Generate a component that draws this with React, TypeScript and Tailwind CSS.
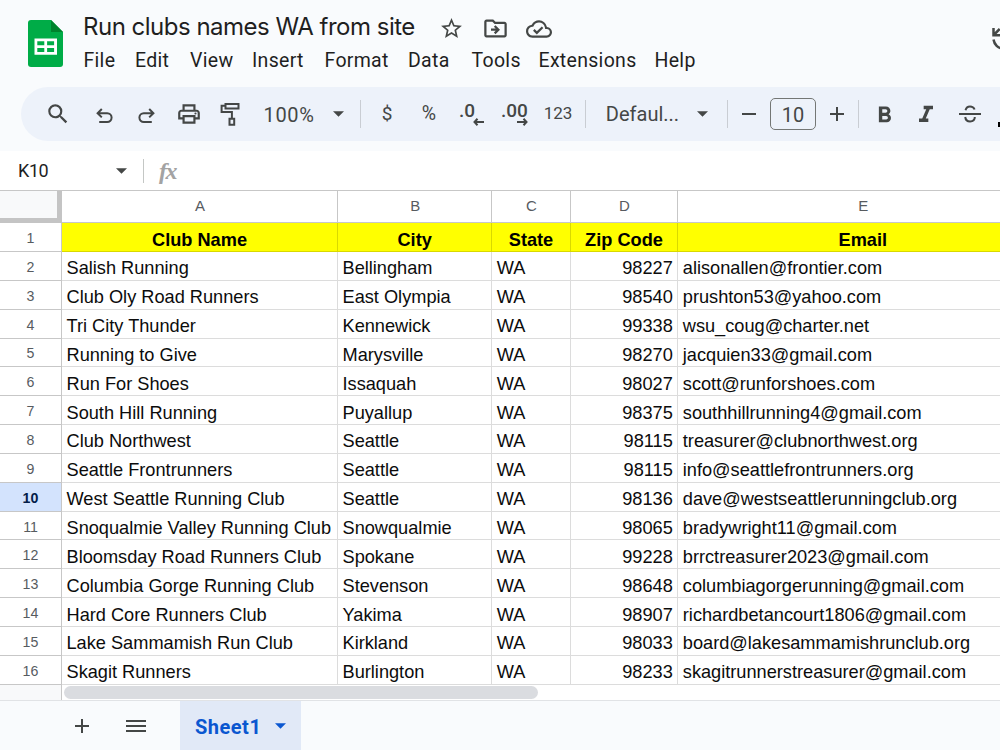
import type { ReactNode } from 'react'
import { MdFormatBold, MdFormatItalic, MdOutlineCloudDone, MdOutlineDriveFileMove, MdOutlinePrint, MdSearch, MdStarBorder } from 'react-icons/md'

const menus = [
  { label: 'File', width: 'w-[51.5px]' },
  { label: 'Edit', width: 'w-[55px]' },
  { label: 'View', width: 'w-[62px]' },
  { label: 'Insert', width: 'w-[72.5px]' },
  { label: 'Format', width: 'w-[83.5px]' },
  { label: 'Data', width: 'w-[63.5px]' },
  { label: 'Tools', width: 'w-[67px]' },
  { label: 'Extensions', width: 'w-[116px]' },
  { label: 'Help', width: 'w-[60px]' },
]

const columns = [
  { letter: 'A', title: 'Club Name' },
  { letter: 'B', title: 'City' },
  { letter: 'C', title: 'State' },
  { letter: 'D', title: 'Zip Code' },
  { letter: 'E', title: 'Email' },
]

const clubs = [
  ['Salish Running', 'Bellingham', 'WA', '98227', 'alisonallen@frontier.com'],
  ['Club Oly Road Runners', 'East Olympia', 'WA', '98540', 'prushton53@yahoo.com'],
  ['Tri City Thunder', 'Kennewick', 'WA', '99338', 'wsu_coug@charter.net'],
  ['Running to Give', 'Marysville', 'WA', '98270', 'jacquien33@gmail.com'],
  ['Run For Shoes', 'Issaquah', 'WA', '98027', 'scott@runforshoes.com'],
  ['South Hill Running', 'Puyallup', 'WA', '98375', 'southhillrunning4@gmail.com'],
  ['Club Northwest', 'Seattle', 'WA', '98115', 'treasurer@clubnorthwest.org'],
  ['Seattle Frontrunners', 'Seattle', 'WA', '98115', 'info@seattlefrontrunners.org'],
  ['West Seattle Running Club', 'Seattle', 'WA', '98136', 'dave@westseattlerunningclub.org'],
  ['Snoqualmie Valley Running Club', 'Snowqualmie', 'WA', '98065', 'bradywright11@gmail.com'],
  ['Bloomsday Road Runners Club', 'Spokane', 'WA', '99228', 'brrctreasurer2023@gmail.com'],
  ['Columbia Gorge Running Club', 'Stevenson', 'WA', '98648', 'columbiagorgerunning@gmail.com'],
  ['Hard Core Runners Club', 'Yakima', 'WA', '98907', 'richardbetancourt1806@gmail.com'],
  ['Lake Sammamish Run Club', 'Kirkland', 'WA', '98033', 'board@lakesammamishrunclub.org'],
  ['Skagit Runners', 'Burlington', 'WA', '98233', 'skagitrunnerstreasurer@gmail.com'],
]

const gridCols = 'grid grid-rows-[100%] grid-cols-[62px_276px_154.3px_78.4px_107.6px_370px]'

function Slot({ width = 'w-[42px]', children }: { width?: string; children: ReactNode }) {
  return <div className={`flex h-full shrink-0 items-center justify-center ${width}`}>{children}</div>
}

function Divider() {
  return <div className="h-[28px] w-px shrink-0 bg-[#c9cdd3]" />
}

function Caret({ className = 'fill-[#444746]' }: { className?: string }) {
  return (
    <svg viewBox="0 0 12 6" className={`h-[6px] w-[11px] shrink-0 ${className}`}>
      <path d="M0 0h12L6 6z" />
    </svg>
  )
}

function SheetsLogo() {
  return (
    <svg viewBox="0 0 35 48" className="h-[48px] w-[35px]">
      <path d="M3 0h20l12 12v32a3 3 0 0 1-3 3H3a3 3 0 0 1-3-3V3a3 3 0 0 1 3-3z" fill="#00ac47" />
      <path d="M23 0l12 12H23z" fill="#00832d" />
      <path d="M6.500 18.500h22.500v16.300H6.500zM9.300 21.300v4h7v-4zM19.100 21.300v4h7v-4zM9.300 28v4h7v-4zM19.100 28v4h7v-4z" fill="#fff" fillRule="evenodd" />
    </svg>
  )
}

function UndoIcon({ flip = false }: { flip?: boolean }) {
  return (
    <svg viewBox="0 0 17 16" className={`mt-[3px] h-[16px] w-[17px] fill-none stroke-[#444746] stroke-2 ${flip ? '-scale-x-100' : ''}`}>
      <path d="M5.800 1L1.600 5.200l4.200 4.200M1.800 5.200h9.400a4.400 4.400 0 0 1 0 8.800H3.200" />
    </svg>
  )
}

function PaintIcon() {
  return (
    <svg viewBox="0 0 20 24" className="h-[24px] w-[20px] fill-none stroke-[#444746] stroke-2">
      <path d="M5.500 2h13v4.600h-13zM5.500 3.800H1.600v6.200h10.300v6.500M9.500 16.700h4.700v6H9.500z" />
    </svg>
  )
}

function StrikeIcon() {
  return (
    <svg viewBox="0 0 22 18" className="h-[18px] w-[22px] fill-none stroke-[#444746] stroke-2">
      <path d="M0 9h22M6.500 5.200C7.200 2.700 9 1.500 11 1.500s3.800 1 4.600 3M6.200 12c.4 3 2.300 4.500 4.900 4.500 2.900 0 4.700-1.600 4.700-4.400" />
    </svg>
  )
}

function DecimalIcon({ digits, direction }: { digits: string; direction: 'left' | 'right' }) {
  return (
    <div className="mr-[1px] flex flex-col items-end">
      <span className={`font-[Roboto,sans-serif] text-[19px] leading-[15px] font-medium text-[#444746] ${direction === 'left' ? 'mr-[9px]' : ''}`}>{digits}</span>
      <svg viewBox="0 0 11 8" className={`h-[8px] w-[11px] fill-none stroke-[#444746] stroke-2 ${direction === 'right' ? '-scale-x-100' : ''}`}>
        <path d="M4.500.8L1.500 4l3 3.200M1.700 4H11" />
      </svg>
    </div>
  )
}

function Header() {
  return (
    <header className="flex h-[87px] shrink-0">
      <div className="w-[83.5px] shrink-0 pt-[20px] pl-[28px]">
        <SheetsLogo />
      </div>
      <div className="w-[892.5px] shrink-0 pt-[9px]">
        <div className="flex h-[36px] items-center text-[#444746]">
          <h1 className="-ml-[0.5px] w-[356px] font-[Inter,sans-serif] text-[24px] tracking-[-0.5px] whitespace-nowrap text-[#1f1f1f]">Run clubs names WA from site</h1>
          <MdStarBorder className="mt-[2px] mr-[18px] size-[25px]" />
          <MdOutlineDriveFileMove className="mt-[3px] mr-[17px] size-[27px]" />
          <MdOutlineCloudDone className="mt-[3px] size-[26px]" />
        </div>
        <nav className="flex h-[31px] items-center pt-px font-[Roboto,sans-serif] text-[19.5px] tracking-[0.3px] text-[#1f1f1f]">
          {menus.map((m) => (
            <button key={m.label} className={`shrink-0 text-left ${m.width}`}>{m.label}</button>
          ))}
        </nav>
      </div>
      <svg viewBox="0 0 24 28" className="mt-[25px] ml-[15px] h-[28px] w-[24px] shrink-0 fill-none stroke-[#444746] stroke-[2.5]">
        <path d="M2.500 3v7.200h7.200M2.700 10l6-6M2.500 14.500c.8 5 4.500 9 9.500 9" />
      </svg>
    </header>
  )
}

function Toolbar() {
  return (
    <div className="ml-[21px] flex h-[54px] shrink-0 items-center overflow-hidden rounded-l-full bg-[#edf2fa] pl-[16px] font-[Roboto,sans-serif] text-[#444746]">
      <Slot><MdSearch className="size-[26px]" /></Slot>
      <Slot width="w-[50px]"><UndoIcon /></Slot>
      <Slot width="w-[34px]"><UndoIcon flip /></Slot>
      <Slot width="w-[52px]"><MdOutlinePrint className="size-[26px]" /></Slot>
      <Slot width="w-[30px]"><PaintIcon /></Slot>
      <Slot width="w-[87px]"><span className="pt-[2px] pl-px text-[20px] tracking-[0.6px]">100%</span></Slot>
      <Slot width="w-[12px]"><Caret /></Slot>
      <Slot width="w-[16px]">{null}</Slot>
      <Divider />
      <Slot width="w-[52px]"><span className="text-[19px]">$</span></Slot>
      <Slot width="w-[32px]"><span className="text-[19.5px]">%</span></Slot>
      <Slot width="w-[54px]"><DecimalIcon digits=".0" direction="left" /></Slot>
      <Slot width="w-[32px]"><DecimalIcon digits=".00" direction="right" /></Slot>
      <Slot width="w-[54px]"><span className="text-[17px]">123</span></Slot>
      <Divider />
      <Slot width="w-[113px]"><span className="text-[20px]">Defaul...</span></Slot>
      <Slot width="w-[7px]"><Caret /></Slot>
      <Slot width="w-[21px]">{null}</Slot>
      <Divider />
      <Slot width="w-[42px]"><div className="h-[2px] w-[14px] bg-[#444746]" /></Slot>
      <div className="flex h-[32px] w-[46px] shrink-0 items-center justify-center rounded-[5px] border border-[#747775] pt-px text-[20px]">10</div>
      <Slot>
        <svg viewBox="0 0 14 14" className="size-[14px] stroke-[#444746] stroke-2"><path d="M7 0v14M0 7h14" /></svg>
      </Slot>
      <Divider />
      <Slot width="w-[50px]"><MdFormatBold className="mt-[2px] size-[27px]" /></Slot>
      <Slot width="w-[34px]"><MdFormatItalic className="mt-[2px] size-[28px]" /></Slot>
      <Slot width="w-[53px]"><StrikeIcon /></Slot>
      <div className="mt-[21px] ml-[2px] h-[5px] w-[20px] shrink-0 bg-black" />
    </div>
  )
}

function FormulaBar() {
  return (
    <div className="flex h-[39px] shrink-0 items-center bg-white">
      <span className="w-[116px] pl-[18px] font-[Roboto,sans-serif] text-[18px] tracking-[-0.4px] text-[#1f1f1f]">K10</span>
      <Caret />
      <div className="ml-[16px] h-[24px] w-px bg-[#c4c7c5]" />
      <span className="ml-[15px] font-['Liberation_Serif',serif] text-[24px] leading-none font-bold tracking-[-1.5px] text-[#a3a3a3] italic">fx</span>
    </div>
  )
}

function Sheet() {
  return (
    <main className="h-[510px] shrink-0 overflow-hidden border-t border-[#c7c7c7] bg-white font-['Liberation_Sans',sans-serif]">
      <div className={`h-[31.5px] ${gridCols}`}>
        <div className="border-r-[5px] border-b-[5px] border-[#c4c4c4] bg-[#f8f9fa]" />
        {columns.map((c) => (
          <div key={c.letter} className="flex items-center justify-center border-r border-b border-[#c7c7c7] pb-px pl-px text-[15px] text-[#575b5f]">{c.letter}</div>
        ))}
      </div>
      <div className={`h-[29.5px] ${gridCols}`}>
        <RowNumber n={1} />
        {columns.map((c) => (
          <div key={c.letter} className="flex items-center justify-center border-r border-b border-[#d9d900] bg-[#ffff00] pt-[7px] text-[18.2px] leading-[21px] font-bold text-black">{c.title}</div>
        ))}
      </div>
      {clubs.map((club, i) => (
        <div key={club[0]} className={`h-[28.85px] ${gridCols}`}>
          <RowNumber n={i + 2} />
          {club.map((value, j) => (
            <div key={j} className={`flex items-center border-r border-b border-[#dcdcdc] px-[4.5px] pt-[6px] text-[18.2px] leading-[21px] whitespace-nowrap text-[#0c0c0c] ${j === 3 ? 'justify-end' : ''}`}>{value}</div>
          ))}
        </div>
      ))}
      <div className="flex h-[16px]">
        <div className="w-[62px] border-r border-[#c7c7c7] bg-[#f8f9fa]" />
        <div className="mt-[1.5px] ml-[2px] h-[13px] w-[474px] rounded-full bg-[#dadce0]" />
      </div>
    </main>
  )
}

function RowNumber({ n }: { n: number }) {
  return (
    <div className={`flex items-center justify-center border-r border-b border-[#c7c7c7] pt-[2px] text-[14.2px] leading-[18px] ${n === 10 ? 'bg-[#d3e3fd] font-bold text-[#041e49]' : 'text-[#575b5f]'}`}>{n}</div>
  )
}

function SheetTabs() {
  return (
    <footer className="flex h-[50px] shrink-0 border-t border-[#e1e3e6] bg-[#f9fbfd]">
      <div className="flex w-[180px] items-center pl-[75px]">
        <svg viewBox="0 0 14 14" className="size-[14px] stroke-[#444746] stroke-2"><path d="M7 0v14M0 7h14" /></svg>
        <svg viewBox="0 0 20 14" className="ml-[37px] h-[14px] w-[20px] stroke-[#444746] stroke-2"><path d="M0 2h20M0 7h20M0 12h20" /></svg>
      </div>
      <div className="flex w-[121px] items-center bg-[#e1e9f7] pl-[15px] text-[#0b57d0]">
        <span className="w-[80px] pt-[2px] font-[Roboto,sans-serif] text-[20px] font-bold tracking-[0.5px]">Sheet1</span>
        <Caret className="fill-[#0b57d0]" />
      </div>
    </footer>
  )
}

export default function App() {
  return (
    <div className="flex h-[750px] w-[1000px] flex-col overflow-hidden bg-[#f9fbfd]">
      <Header />
      <Toolbar />
      <div className="h-[10px] shrink-0" />
      <FormulaBar />
      <Sheet />
      <SheetTabs />
    </div>
  )
}
